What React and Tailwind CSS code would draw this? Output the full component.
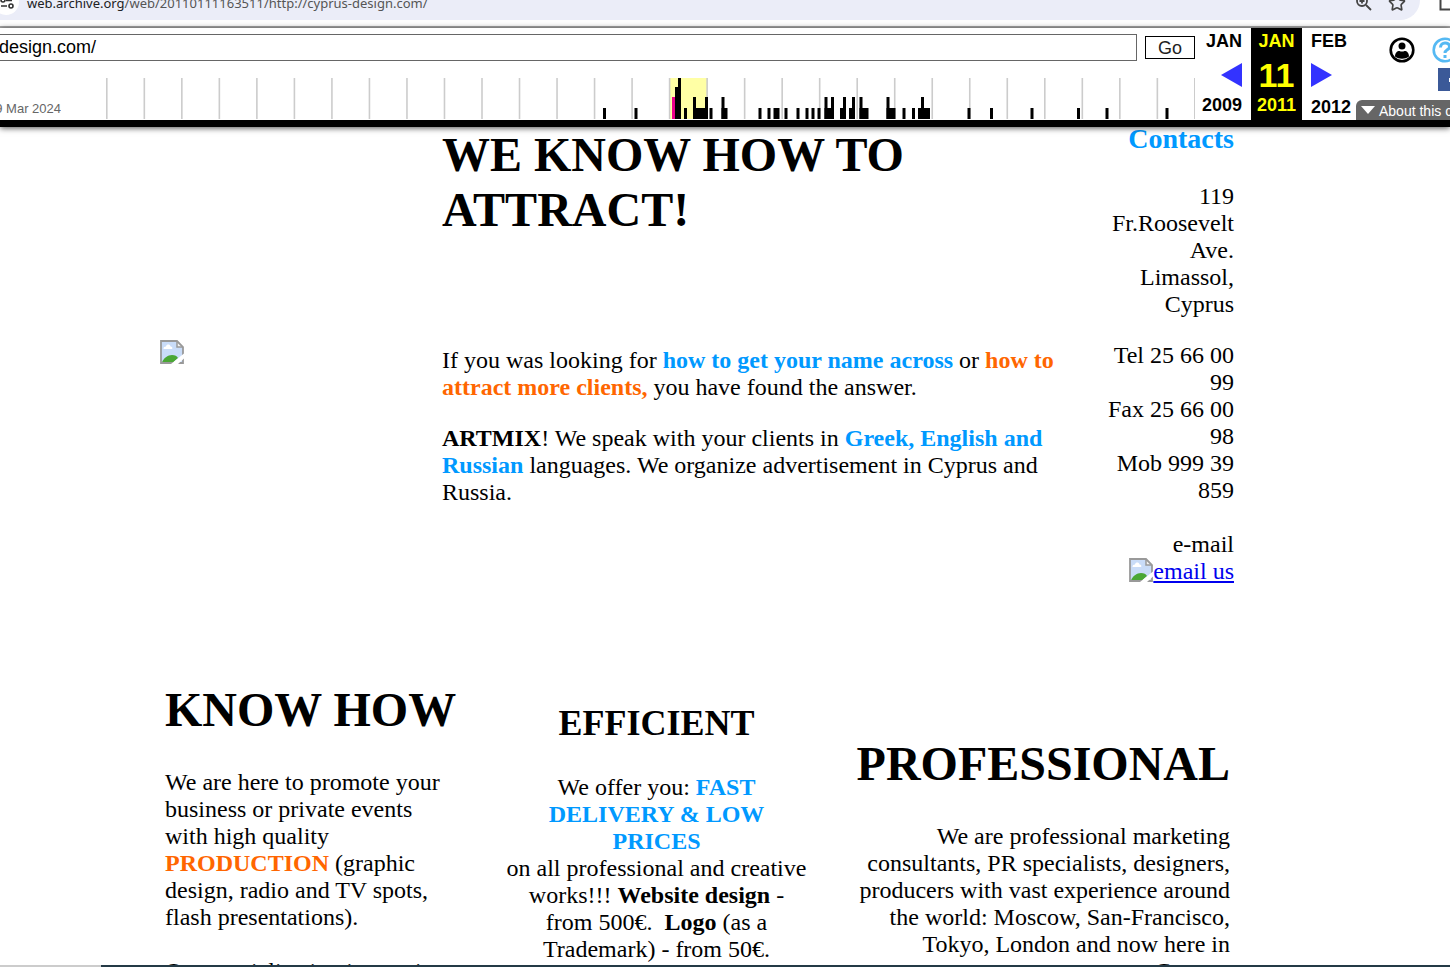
import React from "react";
import { Star } from "lucide-react";

const LOW = 11;
const MID = 22;

// [x, width, height] of each capture bar in the timeline
const captures = [
  [497, 3, LOW], [528.5, 3, LOW], [569, 3, 32], [572, 3, 41], [578, 3, LOW],
  [587, 15, LOW], [587, 3, MID], [599, 3, MID], [603.5, 3, LOW],
  [615.5, 6, LOW], [615.5, 3, MID], [652.5, 3, LOW], [661.5, 3, LOW],
  [667.5, 6, LOW], [678.5, 3, LOW], [690.5, 3, LOW], [699.5, 3, LOW],
  [705.5, 3, LOW], [711.5, 3, LOW], [718.5, 9.5, LOW], [718.5, 3, MID],
  [725, 3, MID], [734, 6, LOW], [737, 3, MID], [743, 6, LOW], [746, 3, MID],
  [753.5, 9, LOW], [753.5, 3, MID], [780.5, 9, LOW], [780.5, 3, MID],
  [796.5, 3, LOW], [806, 3, LOW], [812, 12, LOW], [815, 3, MID],
  [861.5, 3, LOW], [884, 3, LOW], [924.5, 3, LOW], [971, 3, LOW],
  [999.5, 3, LOW], [1059.5, 3, LOW],
];

function Timeline() {
  return (
    <svg className="block h-[41px] w-[1089px] shrink-0" viewBox="0 0 1089 41" aria-label="Captures per year">
      <rect x="564" y="0" width="37.5" height="41" fill="#ffffa5" />
      {Array.from({ length: 30 }, (_, i) => (
        <rect key={i} x={Math.min(i * 37.52, 1088)} y="0" width={i === 29 ? 1 : 1.6} height="41" fill="#ccc" />
      ))}
      <rect x="566" y="19" width="3" height="22" fill="#ec008c" />
      {captures.map(([x, w, h], i) => (
        <rect key={i} x={x} y={41 - h} width={w} height={h} fill="#000" />
      ))}
    </svg>
  );
}

function BrokenImage({ label }) {
  return (
    <svg className="inline-block h-6 w-6 align-baseline" viewBox="0 0 24 24" role="img" aria-label={label}>
      <path d="M1 1h16l6 6v16H1z" fill="#c9dcf8" />
      <path d="M3.500 9c0-2 1-2.600 2.500-2.600C6.500 4 10 4 10.500 6.400c2 0 2.500 2.600 1 2.600z" fill="#fff" />
      <path d="M2 22.500c1-4 6-7.500 10-7.500 3 0 5 1 6 3l-5 4.500z" fill="#4aa735" />
      <path d="M17 1v6h6z" fill="#f4f4f4" />
      <path d="M1 1h16l6 6v16H1z" fill="none" stroke="#999" strokeWidth="1.800" />
      <path d="M17 1v6h6" fill="none" stroke="#999" strokeWidth="1.500" />
      <path d="M24 13.500v5L18 24h-7z" fill="#fff" />
    </svg>
  );
}

function BrowserBar() {
  return (
    <div className="flex h-7 shrink-0 items-start border-b-2 border-[#a9a9a9] bg-white">
      <div className="flex h-5 flex-1 items-start justify-between overflow-hidden rounded-br-[20px] bg-[#ebedf8] pr-[14px]">
        <div className="flex items-start gap-2">
          <svg className="h-4 w-[19px]" viewBox="0 0 19 16" aria-label="Site information">
            <circle cx="6" cy="2" r="13" fill="#fff" />
            <g fill="none" stroke="#333" strokeWidth="1.600">
              <path d="M6 .5h6M1 6h6" />
              <circle cx="3" cy="0" r="2" />
              <circle cx="11" cy="6" r="2" />
            </g>
          </svg>
          <span className="-mt-[7px] font-['Noto_Sans'] text-[13px] leading-5 text-[#555]">
            <span className="text-[#202124]">web.archive.org</span>/web/20110111163511/http://cyprus-design.com/
          </span>
        </div>
        <div className="-mt-[6px] flex gap-4 text-[#444]">
          <svg className="h-[18px] w-[18px]" viewBox="0 0 18 18" fill="none" stroke="currentColor" strokeWidth="1.800" aria-label="Zoom">
            <circle cx="8" cy="7" r="5" />
            <path d="M12 11l5 5M5.500 7h5M8 4.500v5" />
          </svg>
          <Star className="h-[18px] w-[18px]" strokeWidth={2.2} />
        </div>
      </div>
      <svg className="h-5 w-[30px]" viewBox="0 0 30 20" aria-label="Side panel">
        <path d="M20.500-4V9.500H34" fill="none" stroke="#444" strokeWidth="2" />
      </svg>
    </div>
  );
}

function ArchiveToolbar() {
  return (
    <header className="relative z-10 flex h-[99px] shrink-0 border-b-[7px] border-black bg-white font-['Liberation_Sans',sans-serif] shadow-[0_1px_6px_rgba(0,0,0,0.7)]">
      <div className="flex min-w-0 flex-1 flex-col justify-between pt-[6px] pb-px">
        <form className="flex items-center gap-2" onSubmit={(e) => e.preventDefault()}>
          <input
            aria-label="Archived address"
            defaultValue="design.com/"
            className="-ml-[2px] h-[27px] min-w-0 flex-1 border border-[#666] bg-white text-[18px] leading-6 text-black outline-none"
          />
          <button className="h-[23px] w-[50px] border border-black bg-white text-[18px] leading-5 text-[#222]">Go</button>
        </form>
        <div className="flex items-end justify-between">
          <div className="flex w-[61px] justify-end overflow-hidden text-[13px] leading-5 whitespace-nowrap text-[#666]">
            <span>29 Mar 2024</span>
          </div>
          <Timeline />
        </div>
      </div>

      <nav className="flex text-[18px] leading-5 font-bold text-black" aria-label="Capture date">
        <div className="flex w-14 flex-col items-end justify-between pt-[3px] pr-[9px] pb-[5px]">
          <span>JAN</span>
          <a href="#previous" aria-label="Previous capture" className="pt-1">
            <svg className="block h-6 w-[21px]" viewBox="0 0 21 24"><path d="M21 0v24L0 12z" fill="#33f" /></svg>
          </a>
          <span>2009</span>
        </div>
        <div className="flex w-[51px] flex-col items-center justify-between bg-black pt-[3px] pb-[5px] text-[#ff0]">
          <span>JAN</span>
          <span className="pt-1 text-[34px] leading-8">11</span>
          <span>2011</span>
        </div>
        <div className="flex w-[54px] flex-col items-start justify-between pt-[3px] pb-[3px] pl-[9px]">
          <span>FEB</span>
          <a href="#next" aria-label="Next capture" className="pt-[2px]">
            <svg className="block h-6 w-[21px]" viewBox="0 0 21 24"><path d="M0 0v24l21-12z" fill="#33f" /></svg>
          </a>
          <span>2012</span>
        </div>
      </nav>

      <div className="flex w-[94px] flex-col items-end overflow-hidden">
        <div className="flex h-10 w-[61px] shrink-0 items-end gap-[17px] pb-[5px]">
          <svg className="h-[26px] w-[26px] shrink-0" viewBox="0 0 26 26" aria-label="Account">
            <circle cx="13" cy="13" r="11.300" fill="#fff" stroke="#000" strokeWidth="2.600" />
            <circle cx="13" cy="9" r="3.500" />
            <path d="M6 19.500c0-3.500 2-5.500 4.500-5.500 1.500.8 3.500.8 5 0 2.500 0 4.500 2 4.500 5.500-4 3-10 3-14 0z" />
          </svg>
          <svg className="h-[26px] w-[26px] shrink-0" viewBox="0 0 26 26" fill="none" stroke="#55b9f3" aria-label="Help">
            <circle cx="13" cy="13" r="11.300" strokeWidth="2.600" />
            <path d="M8.500 10.500c0-6 9-6 9-.8 0 3.300-4.500 3-4.500 6.300M13 18v3" strokeWidth="3" />
          </svg>
        </div>
        <svg className="h-[23px] w-3 shrink-0" viewBox="0 0 12 23" aria-label="Share">
          <path d="M0 0h12v23H0z" fill="#3b5998" />
          <path d="M11 10h1v4h-1z" fill="#fff" />
        </svg>
        <a href="#about" className="mt-[9px] flex h-5 w-[94px] items-center gap-1 rounded-tl-md bg-[#666] pl-[5px] text-[14px] leading-5 whitespace-nowrap text-white">
          <svg className="h-2 w-[14px] shrink-0" viewBox="0 0 14 8"><path d="M0 0h14L7 8z" fill="#fff" /></svg>
          <span className="pt-[2px]">About this capture</span>
        </a>
      </div>
    </header>
  );
}

function Blue({ children }) {
  return <strong className="text-[#0099ff]">{children}</strong>;
}

function Orange({ children }) {
  return <strong className="text-[#ff6600]">{children}</strong>;
}

export default function App() {
  return (
    <div className="flex h-screen flex-col overflow-hidden bg-white">
      <BrowserBar />
      <ArchiveToolbar />

      <main className="min-h-0 flex-1 overflow-hidden pr-14 font-['Liberation_Serif',serif] text-[24px] leading-[27px] text-black">
        <div className="mx-auto w-full max-w-[1074px]">
          <section className="flex justify-between pb-[94px]">
            <div className="w-[282px] shrink-0 pt-[213px] leading-6">
              <BrokenImage label="Artmix" />
            </div>
            <div className="w-[620px] shrink-0">
              <h1 className="text-[48px] leading-[55px] font-bold">WE KNOW HOW TO ATTRACT!</h1>
              <div className="mt-[110px] flex flex-col gap-6">
                <p>
                  If you was looking for <Blue>how to get your name across</Blue> or{" "}
                  <Orange>how to attract more clients,</Orange> you have found the answer.
                </p>
                <p>
                  <strong>ARTMIX</strong>! We speak with your clients in <Blue>Greek, English and Russian</Blue>{" "}
                  languages. We organize advertisement in Cyprus and Russia.
                </p>
              </div>
            </div>
            <aside className="ml-auto flex w-[132px] shrink-0 flex-col text-right">
              <h2 className="-mt-1 text-[28px] leading-8 font-bold text-[#0099ff]">Contacts</h2>
              <p className="mt-7">119 Fr.Roosevelt Ave. Limassol, Cyprus</p>
              <p className="mt-6">
                Tel 25 66 00 99
                <br />
                Fax 25 66 00 98
                <br />
                Mob 999 39 859
              </p>
              <p className="mt-[27px]">
                e-mail
                <br />
                <a href="#email" className="inline-flex text-[#0000ee]">
                  <BrokenImage label="" />
                  <span className="underline">email us</span>
                </a>
              </p>
            </aside>
          </section>

          <section className="flex items-start justify-between pr-1 pl-[5px]">
            <div className="w-[292px]">
              <h2 className="text-[48px] leading-[55px] font-bold whitespace-nowrap">KNOW HOW</h2>
              <p className="mt-8">
                We are here to promote your business or private events with high quality <Orange>PRODUCTION</Orange>{" "}
                (graphic design, radio and TV spots, flash presentations).
              </p>
              <p className="mt-[27px]">Our specialization is creative</p>
            </div>
            <div className="w-[302px] pt-[21px] text-center">
              <h2 className="text-[36px] leading-[41px] font-bold">EFFICIENT</h2>
              <p className="mt-[30px]">
                We offer you: <Blue>FAST DELIVERY &amp; LOW PRICES</Blue>
                <br />
                on all professional and creative works!!! <strong>Website design</strong> - from 500€. &nbsp;
                <strong>Logo</strong> (as a Trademark) - from 50€.
              </p>
            </div>
            <div className="w-[374px] pt-[54px] text-right">
              <h2 className="text-[48px] leading-[55px] font-bold">PROFESSIONAL</h2>
              <p className="mt-8">
                We are professional marketing consultants, PR specialists, designers, producers with vast experience
                around the world: Moscow, San-Francisco, Tokyo, London and now here in Cyprus.
              </p>
            </div>
          </section>
        </div>
      </main>

      <footer className="flex h-[2px] shrink-0">
        <div className="w-[101px] bg-[#ccc]" />
        <div className="flex-1 bg-[#243a46]" />
      </footer>
    </div>
  );
}
